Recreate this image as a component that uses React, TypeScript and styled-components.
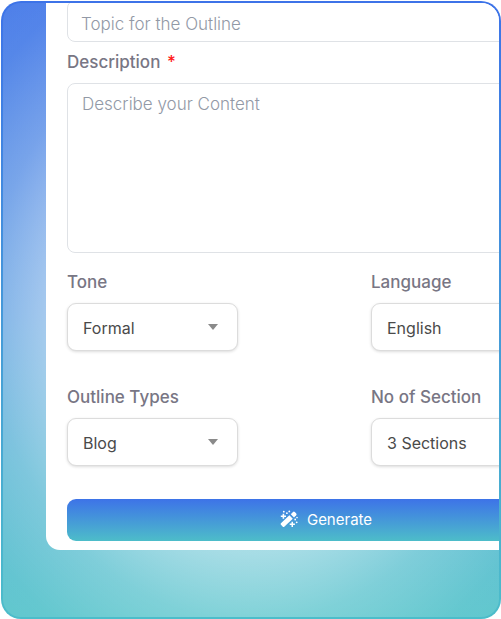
import React from "react";
import styled, { createGlobalStyle } from "styled-components";

const GlobalStyle = createGlobalStyle`
  *, *::before, *::after { box-sizing: border-box; }
  body { margin: 0; background: #ffffff; }
  body, input, textarea, select, button { font-family: Inter, "Open Sans", sans-serif; }
`;

const Frame = styled.main`
  margin: 1px 0 0 1px;
  padding: 0 0 67px 43px;
  border: 2px solid transparent;
  border-radius: 20px;
  overflow: hidden;
  background:
    radial-gradient(ellipse 66% 62% at 50% 51%, rgba(255, 255, 255, 0.75) 0%, rgba(255, 255, 255, 0.48) 62%, rgba(255, 255, 255, 0.24) 80%, rgba(255, 255, 255, 0.08) 100%, rgba(255, 255, 255, 0.04) 120%) padding-box,
    linear-gradient(180deg, #4478e8 0%, #4f8ae3 30%, #5599df 50%, #56b4d3 75%, #57c4cb 100%) padding-box,
    linear-gradient(180deg, #3d73e8 0%, #4cbdca 100%) border-box;
`;

const Card = styled.form`
  display: flex;
  flex-direction: column;
  margin-right: -107px;
  padding: 0 21px 9px;
  border-radius: 0 0 14px 14px;
  background: #ffffff;
`;

const TopicInput = styled.input`
  width: 100%;
  height: 42px;
  margin-top: -3px;
  padding: 5px 13px 0;
  border: 1px solid #dfe2e6;
  border-radius: 8px;
  font-size: 17px;
  font-weight: 300;
  color: #4a4a4a;
  background: #ffffff;
  outline: none;
  &::placeholder { color: #9299a6; opacity: 1; }
`;

const Label = styled.label`
  display: block;
  font-size: 17px;
  line-height: 24px;
  font-weight: 500;
  color: #787684;
`;

const Required = styled.span`
  margin-left: 2px;
  color: #ff1a1a;
`;

const Field = styled.div<{ $top: number }>`
  display: flex;
  flex-direction: column;
  align-items: flex-start;
  gap: 9px;
  margin-top: ${(p) => p.$top}px;
`;

const Description = styled.textarea`
  width: 100%;
  height: 170px;
  padding: 8px 14px;
  border: 1px solid #dfe2e6;
  border-radius: 8px;
  font-size: 17px;
  line-height: 24px;
  font-weight: 300;
  color: #4a4a4a;
  resize: none;
  outline: none;
  &::placeholder { color: #9299a6; opacity: 1; }
`;

const Options = styled.div`
  display: grid;
  grid-template-columns: 1fr 1fr;
  gap: 34px 90px;
  margin-top: 17px;
`;

const SelectBox = styled.div`
  position: relative;
  width: 171px;
`;

const Select = styled.select`
  appearance: none;
  width: 100%;
  height: 48px;
  padding: 2px 40px 0 15px;
  border: 1px solid #dcdcdc;
  border-radius: 9px;
  background: #ffffff;
  box-shadow: 0 1px 3px rgba(0, 0, 0, 0.14);
  font-size: 16px;
  color: #4a4a4a;
  outline: none;
`;

const Caret = styled.svg`
  position: absolute;
  top: 21px;
  right: 20px;
  width: 10px;
  height: 6px;
  fill: #8a8a8a;
  pointer-events: none;
`;

const GenerateButton = styled.button`
  display: flex;
  align-items: center;
  justify-content: center;
  gap: 9px;
  width: 100%;
  height: 42px;
  margin-top: 33px;
  padding: 0 0 2px;
  border: 0;
  border-radius: 9px;
  background: linear-gradient(180deg, #3d73e8 0%, #4dbdc9 100%);
  font-size: 15px;
  color: #ffffff;
  cursor: pointer;
`;

function WandIcon() {
  return (
    <svg width="18" height="18" viewBox="0 0 18 18" fill="#ffffff" aria-hidden="true">
      <path d="M1.2 13 9.4 5.2l3.4 3.5-8.3 7.9a1.300 1.300 0 0 1-1.900 0l-1.400-1.600a1.300 1.300 0 0 1 0-2Z" />
      <path d="m10.8 4.200 2.200-2.200a1.300 1.300 0 0 1 1.800 0l1.400 1.400a1.300 1.300 0 0 1 0 1.800l-2.200 2.200Z" />
      <path d="M2.600 3.800h1.600v1.700H6V7H4.200v1.800H2.600V7H.8V5.500h1.800Z" />
      <path d="M11.500 11.700h1.500v1.800h1.900V15H13v1.900h-1.500V15H9.700v-1.500h1.800Z" />
      <circle cx="3.800" cy="1.700" r=".9" />
      <circle cx="6.900" cy="3.200" r=".9" />
      <circle cx="9.300" cy="1.400" r=".9" />
      <circle cx="15.200" cy="9.500" r=".9" />
      <circle cx="17" cy="7.600" r=".8" />
      <circle cx="16.700" cy="12.300" r=".9" />
    </svg>
  );
}

interface OptionProps {
  id: string;
  label: string;
  choices: string[];
}

function Option({ id, label, choices }: OptionProps) {
  return (
    <Field $top={0}>
      <Label htmlFor={id}>{label}</Label>
      <SelectBox>
        <Select id={id} defaultValue={choices[0]}>
          {choices.map((choice) => (
            <option key={choice}>{choice}</option>
          ))}
        </Select>
        <Caret viewBox="0 0 10 6" aria-hidden="true">
          <path d="M0 0h10L5 6Z" />
        </Caret>
      </SelectBox>
    </Field>
  );
}

export default function App() {
  return (
    <>
      <GlobalStyle />
      <Frame>
        <Card onSubmit={(event) => event.preventDefault()}>
          <TopicInput aria-label="Topic" placeholder="Topic for the Outline" />
          <Field $top={8}>
            <Label htmlFor="description">
              Description <Required>*</Required>
            </Label>
            <Description id="description" placeholder="Describe your Content" />
          </Field>
          <Options>
            <Option id="tone" label="Tone" choices={["Formal"]} />
            <Option id="language" label="Language" choices={["English"]} />
            <Option id="types" label="Outline Types" choices={["Blog"]} />
            <Option id="sections" label="No of Section" choices={["3 Sections"]} />
          </Options>
          <GenerateButton type="submit">
            <WandIcon />
            Generate
          </GenerateButton>
        </Card>
      </Frame>
    </>
  );
}
